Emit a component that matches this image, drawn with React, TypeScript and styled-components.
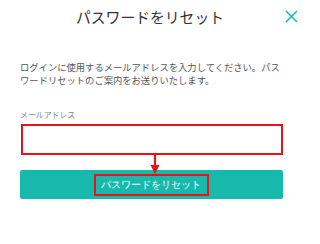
import styled, {createGlobalStyle} from "styled-components";

const GlobalStyle = createGlobalStyle`
  html, body {
    margin: 0;
    padding: 0;
    background: #ffffff;
  }
  body {
    font-family: "Noto Sans CJK JP", "Noto Sans", sans-serif;
  }
`;

const Page = styled.div`
  width: 300px;
  height: 244px;
  background: #ffffff;
  overflow: hidden;
`;

const Header = styled.div`
  display: grid;
  grid-template-columns: 1fr auto 1fr;
  align-items: center;
  height: 34px;
`;

const Title = styled.h1`
  grid-column: 2;
  margin: 0;
  font-size: 14.8px;
  font-weight: 400;
  color: #333333;
  line-height: 34px;
`;

const CloseButton = styled.div`
  grid-column: 3;
  justify-self: end;
  display: flex;
  margin: 0 2px 2px 0;
  cursor: pointer;
`;

const Body = styled.div`
  display: flex;
  flex-direction: column;
  padding: 27px 17px 0 20px;
`;

const Lead = styled.p`
  margin: 0;
  font-size: 9.3px;
  line-height: 13px;
  color: #555555;
`;

const Label = styled.label`
  margin-top: 22px;
  font-size: 7.9px;
  line-height: 12px;
  color: #7d8c8c;
`;

const EmailInput = styled.input`
  box-sizing: border-box;
  margin: 3px 0 0 1px;
  width: 262px;
  height: 31px;
  border: 2px solid #e8121b;
  background: #ffffff;
  outline: none;
  padding: 0 8px;
  font-family: inherit;
`;

const ArrowBox = styled.div`
  position: relative;
  z-index: 1;
  display: flex;
  justify-content: center;
  height: 15px;
  padding-left: 7px;
`;

const SubmitButton = styled.button`
  display: flex;
  align-items: center;
  justify-content: center;
  width: 263px;
  height: 29px;
  padding: 0;
  border: none;
  border-radius: 2px;
  background: #18b9ad;
  cursor: pointer;
`;

const ButtonLabel = styled.span`
  box-sizing: border-box;
  display: flex;
  align-items: center;
  height: 22px;
  padding: 0 6px 0 5px;
  border: 2px solid #e8121b;
  font-family: inherit;
  font-size: 10px;
  color: #ffffff;
`;

export default function App() {
  return (
    <Page>
      <GlobalStyle />
      <Header>
        <Title>パスワードをリセット</Title>
        <CloseButton>
          <svg width="13" height="13" viewBox="0 0 13 13">
            <path d="M1 1L12 12M12 1L1 12" stroke="#18b9ad" strokeWidth="1.5" fill="none" />
          </svg>
        </CloseButton>
      </Header>
      <Body>
        <Lead>
          ログインに使用するメールアドレスを入力してください。パスワードリセットのご案内をお送りいたします。
        </Lead>
        <Label>メールアドレス</Label>
        <EmailInput type="email" />
        <ArrowBox>
          <svg width="10" height="19" viewBox="0 0 10 19" style={{overflow: "visible"}}>
            <path d="M5 0V11" stroke="#e8121b" strokeWidth="2.2" />
            <path d="M0.5 10L9.5 10L5 19Z" fill="#e8121b" />
          </svg>
        </ArrowBox>
        <SubmitButton>
          <ButtonLabel>パスワードをリセット</ButtonLabel>
        </SubmitButton>
      </Body>
    </Page>
  );
}
